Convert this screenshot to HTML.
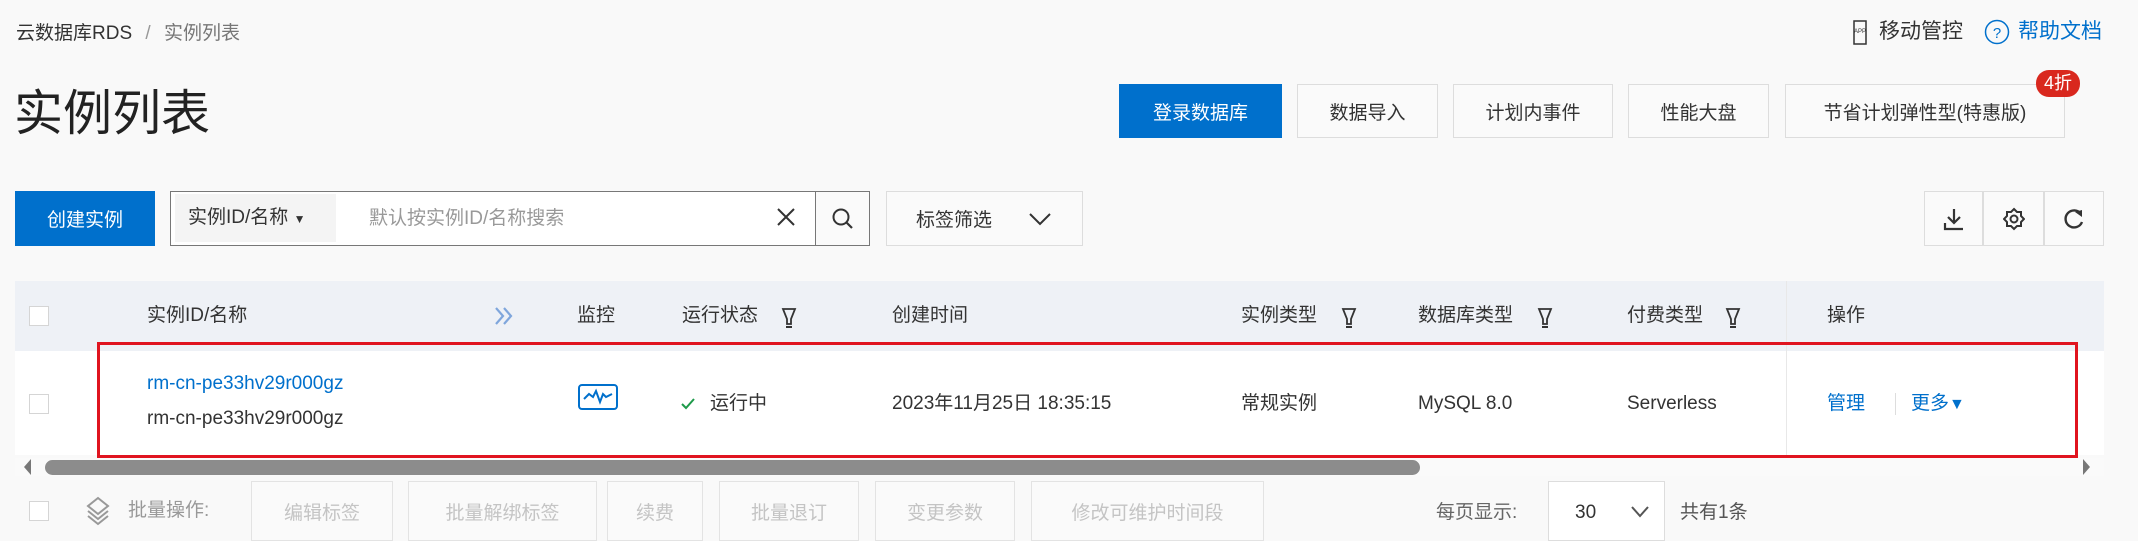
<!DOCTYPE html>
<html><head><meta charset="utf-8"><style>
*{box-sizing:border-box;margin:0;padding:0}
body{width:2138px;height:530px;overflow:hidden;background:#f9f9f9;font-family:"Liberation Sans","Noto Sans CJK SC",sans-serif;color:#333;font-size:19px;position:relative}
.a{position:absolute;white-space:nowrap;line-height:28px}
.btn{position:absolute;border:1px solid #ddd;background:#fafafa;display:flex;align-items:center;justify-content:center;font-size:19px;color:#333}
.blue{background:#0070cc;border-color:#0070cc;color:#fff}
.cb{position:absolute;width:20px;height:20px;border:1px solid #d5d5d5;background:#fff}
.dis{color:#c4c4c4;background:#fafafa;border-color:#e3e3e3}
</style></head><body>
<div class="a" style="left:16px;top:20px;color:#333">云数据库RDS <span style="color:#999;margin:0 8px">/</span> <span style="color:#777">实例列表</span></div>
<svg class="a" style="left:1853px;top:20px" width="14" height="25" viewBox="0 0 14 25"><rect x="1" y="1" width="12" height="23" fill="none" stroke="#333" stroke-width="1.5"/><text x="7" y="13" font-size="6" text-anchor="middle" fill="#333" font-family="Liberation Sans">APP</text></svg>
<div class="a" style="left:1879px;top:18px;font-size:21px">移动管控</div>
<svg class="a" style="left:1984px;top:19px" width="26" height="26"><circle cx="13" cy="13" r="11.5" fill="none" stroke="#0070cc" stroke-width="1.5"/><text x="13" y="19" font-size="15" text-anchor="middle" fill="#0070cc" font-family="Liberation Sans">?</text></svg>
<div class="a" style="left:2018px;top:18px;font-size:21px;color:#0070cc">帮助文档</div>
<div class="a" style="left:14px;top:86px;font-size:49px;line-height:56px;color:#222">实例列表</div>
<div class="btn blue" style="left:1119px;top:84px;width:163px;height:54px">登录数据库</div>
<div class="btn" style="left:1297px;top:84px;width:141px;height:54px">数据导入</div>
<div class="btn" style="left:1453px;top:84px;width:160px;height:54px">计划内事件</div>
<div class="btn" style="left:1628px;top:84px;width:141px;height:54px">性能大盘</div>
<div class="btn" style="left:1785px;top:84px;width:280px;height:54px">节省计划弹性型(特惠版)</div>
<div class="a" style="left:2036px;top:70px;width:44px;height:27px;border-radius:13px;background:#d9281e;color:#fff;font-size:18px;line-height:27px;text-align:center">4折</div>
<div class="btn blue" style="left:15px;top:191px;width:140px;height:55px">创建实例</div>
<div class="a" style="left:170px;top:191px;width:700px;height:55px;border:1px solid #777;background:#fff"></div>
<div class="a" style="left:175px;top:194px;width:161px;height:48px;background:#f4f4f4;line-height:48px;padding-left:13px">实例ID/名称 <span style="font-size:12px">▼</span></div>
<div class="a" style="left:369px;top:205px;color:#999">默认按实例ID/名称搜索</div>
<svg class="a" style="left:776px;top:207px" width="20" height="20"><path d="M2 2L18 18M18 2L2 18" stroke="#333" stroke-width="2"/></svg>
<div class="a" style="left:815px;top:191px;width:55px;height:55px;border:1px solid #777;background:#fafafa"></div>
<svg class="a" style="left:831px;top:207px" width="24" height="24"><circle cx="10" cy="10" r="7.5" fill="none" stroke="#333" stroke-width="2"/><path d="M15 15L21 21" stroke="#333" stroke-width="2.2"/></svg>
<div class="btn" style="left:886px;top:191px;width:197px;height:55px;justify-content:flex-start;padding-left:29px">标签筛选<svg style="margin-left:36px" width="24" height="14"><path d="M2 2L12 12L22 2" fill="none" stroke="#333" stroke-width="2"/></svg></div>
<div class="btn" style="left:1924px;top:191px;width:59px;height:55px"><svg width="22" height="24"><path d="M11 2V16M5 10L11 16L17 10M2 16V22H20" fill="none" stroke="#333" stroke-width="2.2"/></svg></div>
<div class="btn" style="left:1983px;top:191px;width:61px;height:55px"><svg width="22" height="24" viewBox="0 0 22 24"><path d="M11 2L14 5L18 5L18 9L21 12L18 15L18 19L14 19L11 22L8 19L4 19L4 15L1 12L4 9L4 5L8 5Z" fill="none" stroke="#333" stroke-width="2"/><circle cx="11" cy="12" r="3.5" fill="none" stroke="#333" stroke-width="2"/></svg></div>
<div class="btn" style="left:2044px;top:191px;width:60px;height:55px"><svg width="22" height="24"><path d="M18 7A8.5 8.5 0 1 0 19 15" fill="none" stroke="#333" stroke-width="2.4"/><path d="M12 5L19 3L19 10Z" fill="#333"/></svg></div>
<div class="a" style="left:15px;top:281px;width:2089px;height:70px;background:#eef1f6"></div>
<div class="a" style="left:15px;top:351px;width:2089px;height:104px;background:#fff"></div>
<div class="a" style="left:1786px;top:281px;width:1px;height:174px;background:#e8e8e8"></div>
<div class="cb" style="left:29px;top:306px"></div>
<div class="a" style="left:147px;top:302px">实例ID/名称</div>
<svg class="a" style="left:493px;top:305px" width="22" height="22"><path d="M3 3L10 11L3 19M11 3L18 11L11 19" fill="none" stroke="#7fa6dc" stroke-width="2.2"/></svg>
<div class="a" style="left:577px;top:302px">监控</div>
<div class="a" style="left:682px;top:302px">运行状态</div>
<div class="a" style="left:892px;top:302px">创建时间</div>
<div class="a" style="left:1241px;top:302px">实例类型</div>
<div class="a" style="left:1418px;top:302px">数据库类型</div>
<div class="a" style="left:1627px;top:302px">付费类型</div>
<div class="a" style="left:1827px;top:302px">操作</div>
<svg class="a" style="left:781px;top:307px" width="16" height="21"><path d="M2 2H14L10 12V17H6V12Z" fill="none" stroke="#333" stroke-width="1.8"/><path d="M5 20H11" stroke="#333" stroke-width="2"/></svg>
<svg class="a" style="left:1341px;top:307px" width="16" height="21"><path d="M2 2H14L10 12V17H6V12Z" fill="none" stroke="#333" stroke-width="1.8"/><path d="M5 20H11" stroke="#333" stroke-width="2"/></svg>
<svg class="a" style="left:1537px;top:307px" width="16" height="21"><path d="M2 2H14L10 12V17H6V12Z" fill="none" stroke="#333" stroke-width="1.8"/><path d="M5 20H11" stroke="#333" stroke-width="2"/></svg>
<svg class="a" style="left:1725px;top:307px" width="16" height="21"><path d="M2 2H14L10 12V17H6V12Z" fill="none" stroke="#333" stroke-width="1.8"/><path d="M5 20H11" stroke="#333" stroke-width="2"/></svg>
<div class="cb" style="left:29px;top:394px"></div>
<div class="a" style="left:147px;top:370px;color:#0070cc">rm-cn-pe33hv29r000gz</div>
<div class="a" style="left:147px;top:405px">rm-cn-pe33hv29r000gz</div>
<svg class="a" style="left:578px;top:384px" width="40" height="26"><rect x="1" y="1" width="38" height="24" rx="3" fill="none" stroke="#0070cc" stroke-width="2"/><path d="M6 15L11 10L15 13L18 7L22 18L25 10L28 13L34 10" fill="none" stroke="#0070cc" stroke-width="2"/></svg>
<svg class="a" style="left:681px;top:398px" width="14" height="12"><path d="M1 6L5 10L13 1" fill="none" stroke="#1e9a4a" stroke-width="2"/></svg>
<div class="a" style="left:710px;top:390px">运行中</div>
<div class="a" style="left:892px;top:390px">2023年11月25日 18:35:15</div>
<div class="a" style="left:1241px;top:390px">常规实例</div>
<div class="a" style="left:1418px;top:390px">MySQL 8.0</div>
<div class="a" style="left:1627px;top:390px">Serverless</div>
<div class="a" style="left:1827px;top:390px;color:#0070cc">管理</div>
<div class="a" style="left:1895px;top:393px;width:1px;height:22px;background:#ddd"></div>
<div class="a" style="left:1911px;top:390px;color:#0070cc">更多<span style="font-size:16px">▼</span></div>
<div class="a" style="left:97px;top:342px;width:1981px;height:116px;border:3px solid #e0141f"></div>
<div class="a" style="left:15px;top:458px;width:2089px;height:18px;background:#fafafa"></div>
<div class="a" style="left:45px;top:460px;width:1375px;height:15px;border-radius:8px;background:#8c8c8c"></div>
<svg class="a" style="left:24px;top:459px" width="8" height="16"><path d="M7 0L0 8L7 16Z" fill="#777"/></svg>
<svg class="a" style="left:2083px;top:459px" width="8" height="16"><path d="M0 0L7 8L0 16Z" fill="#777"/></svg>
<div class="cb" style="left:29px;top:501px"></div>
<svg class="a" style="left:86px;top:496px" width="24" height="30"><path d="M12 2L22 10L12 18L2 10Z M2 15L12 23L22 15 M2 20L12 28L22 20" fill="none" stroke="#999" stroke-width="2"/></svg>
<div class="a" style="left:128px;top:497px;color:#999">批量操作:</div>
<div class="btn dis" style="left:251px;top:481px;width:142px;height:60px">编辑标签</div>
<div class="btn dis" style="left:408px;top:481px;width:189px;height:60px">批量解绑标签</div>
<div class="btn dis" style="left:607px;top:481px;width:96px;height:60px">续费</div>
<div class="btn dis" style="left:719px;top:481px;width:140px;height:60px">批量退订</div>
<div class="btn dis" style="left:875px;top:481px;width:140px;height:60px">变更参数</div>
<div class="btn dis" style="left:1031px;top:481px;width:233px;height:60px">修改可维护时间段</div>
<div class="a" style="left:1436px;top:499px;color:#666">每页显示:</div>
<div class="a" style="left:1548px;top:481px;width:117px;height:60px;border:1px solid #ddd;background:#fff"></div>
<div class="a" style="left:1575px;top:499px">30</div>
<svg class="a" style="left:1630px;top:505px" width="20" height="13"><path d="M2 2L10 11L18 2" fill="none" stroke="#555" stroke-width="2"/></svg>
<div class="a" style="left:1680px;top:499px;color:#555">共有1条</div>
</body></html>
